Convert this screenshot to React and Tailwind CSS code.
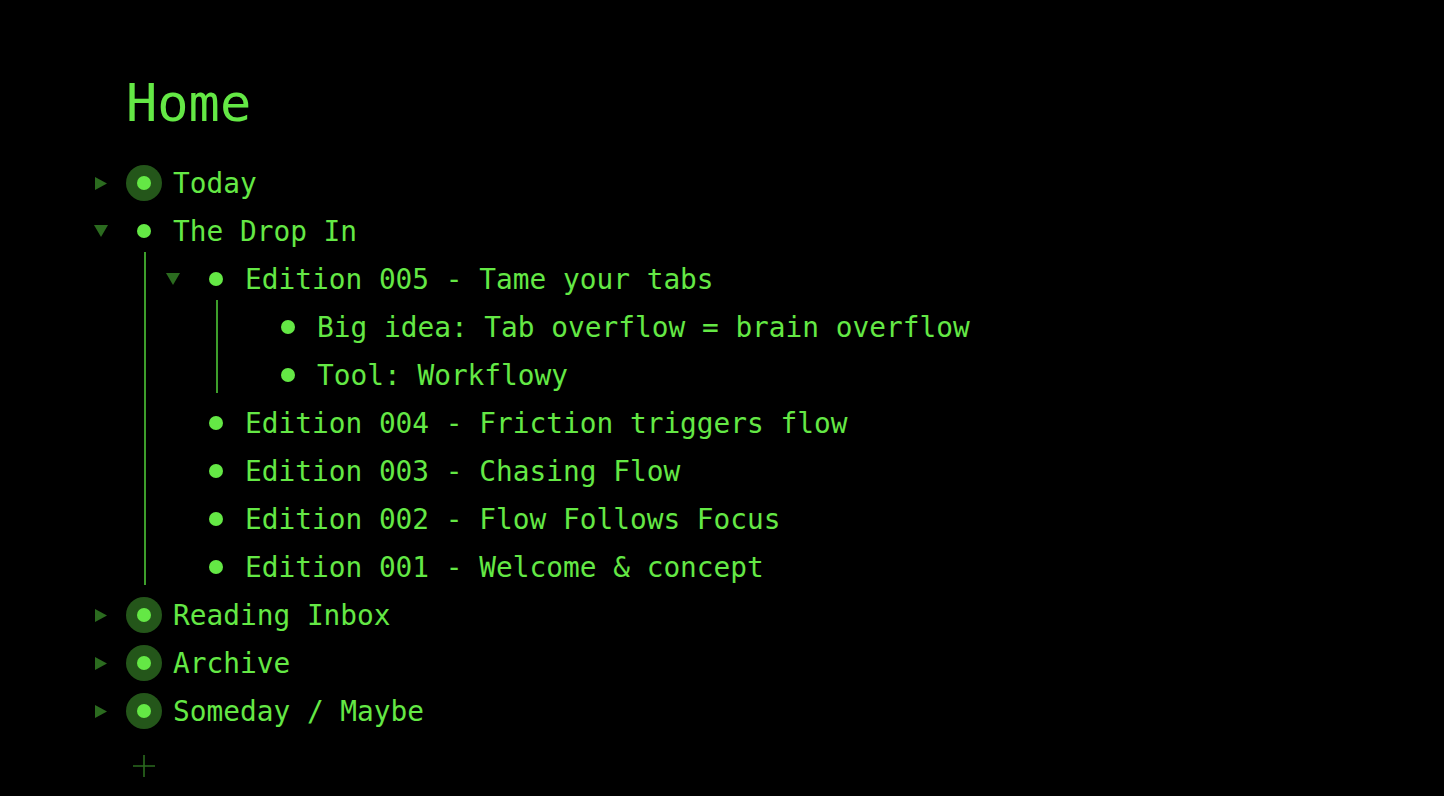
import React from "react";

const GREEN = "text-[#64e845]";

function Caret({ dir }) {
  if (dir === "right") {
    return (
      <svg width="12" height="13" viewBox="0 0 12 13" className="block">
        <polygon points="0,0 12,6.5 0,13" fill="#2b6b1f" />
      </svg>
    );
  }
  if (dir === "down") {
    return (
      <svg width="14" height="12" viewBox="0 0 14 12" className="block">
        <polygon points="0,0 14,0 7,12" fill="#2b6b1f" />
      </svg>
    );
  }
  return null;
}

function Bullet({ collapsed }) {
  return (
    <div className="w-[36px] h-[36px] flex items-center justify-center">
      {collapsed ? (
        <div className="w-[36px] h-[36px] rounded-full bg-[#24561a] flex items-center justify-center">
          <div className="w-[14px] h-[14px] rounded-full bg-[#64e845]" />
        </div>
      ) : (
        <div className="w-[14px] h-[14px] rounded-full bg-[#64e845]" />
      )}
    </div>
  );
}

function Row({ caret, collapsed, text }) {
  return (
    <div className="flex items-center h-12">
      <div className="w-[22px] flex items-center justify-center">
        <Caret dir={caret} />
      </div>
      <div className="ml-[14px]">
        <Bullet collapsed={collapsed} />
      </div>
      <div className={`ml-[11px] pt-[2px] whitespace-pre text-[27.8px] leading-[46px] ${GREEN}`}>{text}</div>
    </div>
  );
}

function Children({ children }) {
  return (
    <div className="relative ml-[54px] pl-[18px]">
      <div className="absolute left-0 top-[-3px] bottom-[6px] w-[2px] bg-[#3d9e2b]" />
      {children}
    </div>
  );
}

export default function App() {
  return (
    <div
      className="min-h-[796px] w-full bg-black"
      style={{ fontFamily: '"DejaVu Sans Mono", "Liberation Mono", monospace' }}
    >
      <div className="pt-[73px] pl-[90px]">
        <h1 className={`pl-[36px] text-[52px] leading-[60px] font-normal ${GREEN} mb-[26px]`}>Home</h1>
        <Row caret="right" collapsed text="Today" />
        <Row caret="down" text="The Drop In" />
        <Children>
          <Row caret="down" text="Edition 005 - Tame your tabs" />
          <Children>
            <Row text="Big idea: Tab overflow = brain overflow" />
            <Row text="Tool: Workflowy" />
          </Children>
          <Row text="Edition 004 - Friction triggers flow" />
          <Row text="Edition 003 - Chasing Flow" />
          <Row text="Edition 002 - Flow Follows Focus" />
          <Row text="Edition 001 - Welcome & concept" />
        </Children>
        <Row caret="right" collapsed text="Reading Inbox" />
        <Row caret="right" collapsed text="Archive" />
        <Row caret="right" collapsed text="Someday / Maybe" />
        <div className="flex items-center h-12 mt-[7px]">
          <div className="w-[22px]" />
          <div className="ml-[14px] w-[36px] h-[36px] flex items-center justify-center">
            <svg width="24" height="24" viewBox="0 0 24 24" className="block">
              <path d="M12 1v22M1 12h22" stroke="#2b6b1f" strokeWidth="1.6" fill="none" />
            </svg>
          </div>
        </div>
      </div>
    </div>
  );
}
